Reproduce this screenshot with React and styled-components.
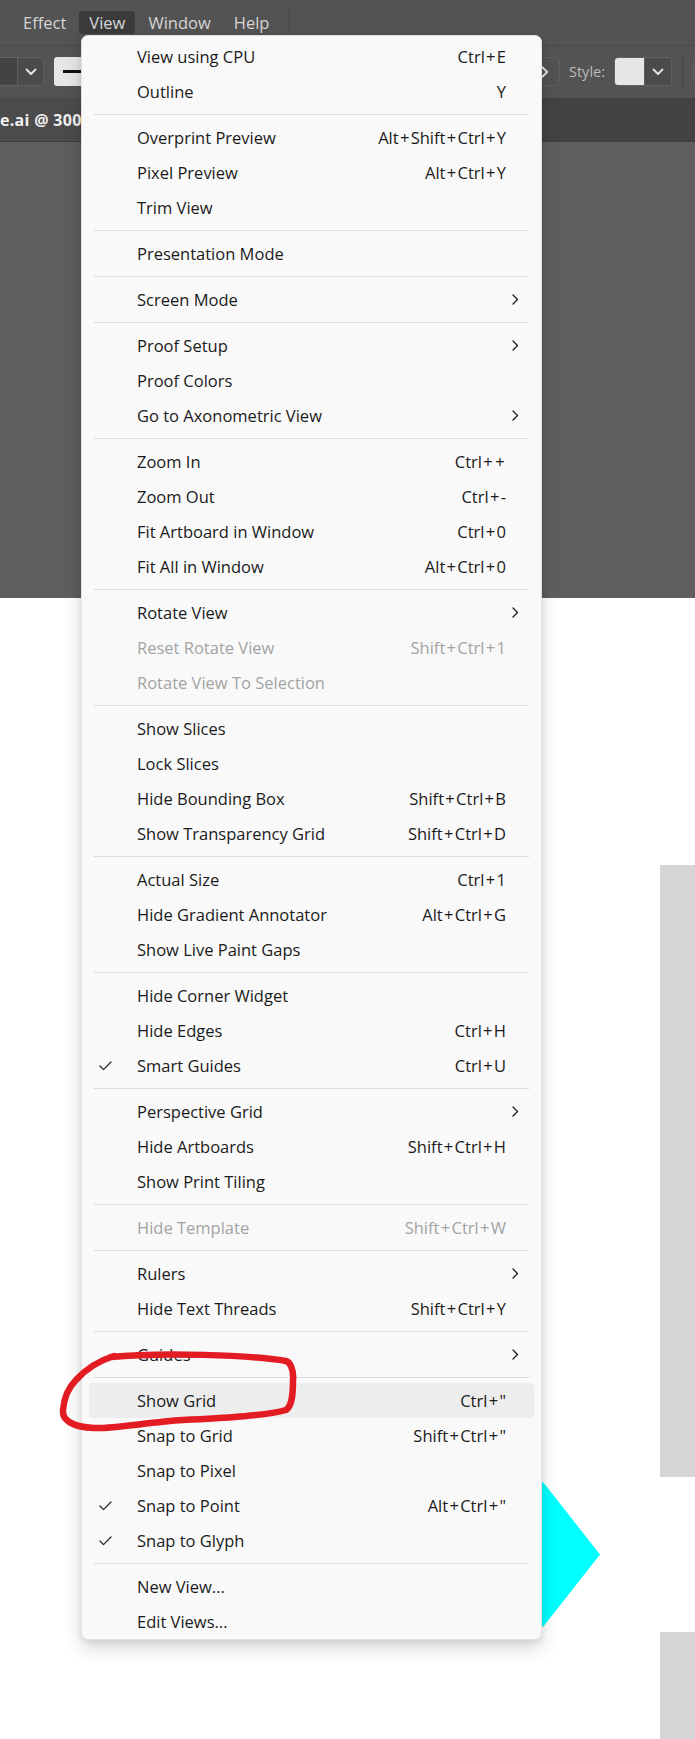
import React from "react";
import styled, { createGlobalStyle } from "styled-components";

const Global = createGlobalStyle`
  html, body { margin: 0; padding: 0; background: #ffffff; }
  * { box-sizing: border-box; }
`;

const Page = styled.div`
  position: relative;
  width: 695px;
  height: 1739px;
  overflow: hidden;
  font-family: "Open Sans", "Noto Sans", sans-serif;
  display: flex;
  flex-direction: column;
`;

/* ---------- application chrome ---------- */
const Chrome = styled.div`
  display: flex;
  flex-direction: column;
  height: 598px;
  background: #5e5e5e;
`;

const MenuBar = styled.div`
  height: 45px;
  background: #535353;
  display: flex;
  align-items: center;
  padding-left: 13px;
  gap: 3px;
`;

const MenuTitle = styled.div`
  height: 23px;
  padding: 0 10px;
  display: flex;
  align-items: center;
  font-size: 16.5px;
  color: #d6d6d6;
  border-radius: 3px;
  background: ${(p) => (p.$open ? "#3b3b3b" : "transparent")};
  margin-top: -1px;
`;

const BarDivider = styled.div`
  width: 1px;
  height: 30px;
  background: #464646;
  margin-left: 7px;
  margin-top: 2px;
`;

const ControlBar = styled.div`
  height: 53px;
  background: #535353;
  border-top: 1px solid #4a4a4a;
  display: flex;
  align-items: center;
  padding-bottom: 1px;
`;

const Dropdown = styled.div`
  height: 29px;
  width: ${(p) => p.$w}px;
  margin-left: ${(p) => p.$ml || 0}px;
  border: 1px solid #616161;
  border-radius: 4px;
  overflow: hidden;
  display: flex;
  flex-shrink: 0;
`;

const Field = styled.div`
  flex: 1;
  background: ${(p) => p.$bg || "#474747"};
  display: flex;
  align-items: center;
`;

const Caret = styled.div`
  width: ${(p) => p.$w || 26}px;
  background: #4b4b4b;
  border-left: 1px solid #5f5f5f;
  display: flex;
  align-items: center;
  justify-content: center;
`;

const StrokeBox = styled.div`
  height: 29px;
  width: 60px;
  margin-left: 10px;
  background: #e6e6e6;
  border-radius: 3px;
  display: flex;
  align-items: center;
  padding-left: 9px;
  flex-shrink: 0;
`;

const Dash = styled.div`
  width: 40px;
  height: 3px;
  background: #111;
`;

const RightTools = styled.div`
  margin-left: auto;
  margin-right: -20px;
  display: flex;
  align-items: center;
  gap: 9px;
`;

const ArrowBox = styled.div`
  width: 40px;
  height: 29px;
  border: 1px solid #5f5f5f;
  border-radius: 4px;
  display: flex;
  align-items: center;
  justify-content: flex-end;
  padding-right: 10px;
`;

const ToolLabel = styled.span`
  font-size: 14.5px;
  color: #bcbcbc;
`;

const VDivider = styled.div`
  width: 1px;
  height: 35px;
  background: #474747;
  margin: 0 1px;
`;

const TabBar = styled.div`
  height: 43px;
  background: #434343;
  display: flex;
  align-items: stretch;
`;

const DocTab = styled.div`
  width: 120px;
  background: #4b4b4b;
  display: flex;
  align-items: center;
  font-size: 16px;
  font-weight: 700;
  letter-spacing: 0.3px;
  color: #f0f0f0;
  white-space: nowrap;
  overflow: hidden;
`;

const DarkCanvas = styled.div`
  flex: 1;
  border-top: 1px solid #3e3e3e;
  background: #5e5e5e;
`;

/* ---------- white artboard ---------- */
const Artboard = styled.div`
  position: relative;
  flex: 1;
  background: #ffffff;
`;

const GrayBlock = styled.div`
  position: absolute;
  left: 660px;
  right: 0;
  background: #d5d5d8;
`;

const Diamond = styled.svg`
  position: absolute;
  left: 486px;
  top: 884px;
`;

/* ---------- dropdown menu ---------- */
const Menu = styled.div`
  position: absolute;
  left: 81px;
  top: 35px;
  width: 461px;
  padding: 3px 0 0;
  background: #f9f9f9;
  border: 1px solid #e2e2e2;
  border-radius: 7px;
  box-shadow: 0 8px 18px rgba(0, 0, 0, 0.16), 0 2px 6px rgba(0, 0, 0, 0.08);
  font-size: 16.5px;
  color: #1b1b1b;
`;

const Row = styled.div`
  height: 35px;
  margin: 0 7px;
  display: grid;
  grid-template-columns: 48px 1fr auto 28px;
  align-items: center;
  border-radius: 4px;
  background: ${(p) => (p.$active ? "#ededed" : "transparent")};
  color: ${(p) => (p.$disabled ? "#a3a3a3" : "#1b1b1b")};
  white-space: nowrap;
`;

const CheckCell = styled.div`
  padding-left: 10px;
  display: flex;
  align-items: center;
`;

const Shortcut = styled.span`
  text-align: right;
`;

const Plus = styled.span`
  padding: 0 1.3px;
`;

const SubCell = styled.div`
  display: flex;
  justify-content: flex-end;
  padding-right: 15px;
`;

const Separator = styled.div`
  height: 1px;
  margin: 5px 12px;
  background: #dcdcdc;
`;

const Scribble = styled.svg`
  position: absolute;
  left: 50px;
  top: 1340px;
  overflow: visible;
  pointer-events: none;
`;

const DownChevron = ({ color = "#e6e6e6" }) => (
  <svg width="12" height="8" viewBox="0 0 12 8">
    <polyline points="1.5,1.5 6,6 10.5,1.5" fill="none" stroke={color} strokeWidth="1.8" strokeLinecap="round" strokeLinejoin="round" />
  </svg>
);

const RightChevron = ({ color = "#1b1b1b", w = 7, h = 11, sw = 1.3 }) => (
  <svg width={w} height={h} viewBox="0 0 7 11">
    <polyline points="1,1 5.5,5.5 1,10" fill="none" stroke={color} strokeWidth={sw} strokeLinecap="round" strokeLinejoin="round" />
  </svg>
);

const Check = () => (
  <svg width="13" height="10" viewBox="0 0 13 10">
    <polyline points="1,5 4.5,8.6 12,1" fill="none" stroke="#2a2a2a" strokeWidth="1.3" strokeLinecap="round" strokeLinejoin="round" />
  </svg>
);

const renderShortcut = (sc) =>
  Array.from(sc).map((ch, i) => (ch === "+" ? <Plus key={i}>+</Plus> : ch));

const groups = [
  [{ label: "View using CPU", sc: "Ctrl+E" }, { label: "Outline", sc: "Y" }],
  [
    { label: "Overprint Preview", sc: "Alt+Shift+Ctrl+Y" },
    { label: "Pixel Preview", sc: "Alt+Ctrl+Y" },
    { label: "Trim View" },
  ],
  [{ label: "Presentation Mode" }],
  [{ label: "Screen Mode", sub: true }],
  [
    { label: "Proof Setup", sub: true },
    { label: "Proof Colors" },
    { label: "Go to Axonometric View", sub: true },
  ],
  [
    { label: "Zoom In", sc: "Ctrl++" },
    { label: "Zoom Out", sc: "Ctrl+-" },
    { label: "Fit Artboard in Window", sc: "Ctrl+0" },
    { label: "Fit All in Window", sc: "Alt+Ctrl+0" },
  ],
  [
    { label: "Rotate View", sub: true },
    { label: "Reset Rotate View", sc: "Shift+Ctrl+1", disabled: true },
    { label: "Rotate View To Selection", disabled: true },
  ],
  [
    { label: "Show Slices" },
    { label: "Lock Slices" },
    { label: "Hide Bounding Box", sc: "Shift+Ctrl+B" },
    { label: "Show Transparency Grid", sc: "Shift+Ctrl+D" },
  ],
  [
    { label: "Actual Size", sc: "Ctrl+1" },
    { label: "Hide Gradient Annotator", sc: "Alt+Ctrl+G" },
    { label: "Show Live Paint Gaps" },
  ],
  [
    { label: "Hide Corner Widget" },
    { label: "Hide Edges", sc: "Ctrl+H" },
    { label: "Smart Guides", sc: "Ctrl+U", checked: true },
  ],
  [
    { label: "Perspective Grid", sub: true },
    { label: "Hide Artboards", sc: "Shift+Ctrl+H" },
    { label: "Show Print Tiling" },
  ],
  [{ label: "Hide Template", sc: "Shift+Ctrl+W", disabled: true }],
  [{ label: "Rulers", sub: true }, { label: "Hide Text Threads", sc: "Shift+Ctrl+Y" }],
  [{ label: "Guides", sub: true }],
  [
    { label: "Show Grid", sc: 'Ctrl+"', active: true },
    { label: "Snap to Grid", sc: 'Shift+Ctrl+"' },
    { label: "Snap to Pixel" },
    { label: "Snap to Point", sc: 'Alt+Ctrl+"', checked: true },
    { label: "Snap to Glyph", checked: true },
  ],
  [{ label: "New View..." }, { label: "Edit Views..." }],
];

export default function App() {
  return (
    <Page>
      <Global />
      <Chrome>
        <MenuBar>
          <MenuTitle>Effect</MenuTitle>
          <MenuTitle $open>View</MenuTitle>
          <MenuTitle>Window</MenuTitle>
          <MenuTitle>Help</MenuTitle>
          <BarDivider />
        </MenuBar>
        <ControlBar>
          <Dropdown $w={64} $ml={-20}>
            <Field $bg="#434343" />
            <Caret>
              <DownChevron />
            </Caret>
          </Dropdown>
          <StrokeBox>
            <Dash />
          </StrokeBox>
          <RightTools>
            <ArrowBox>
              <RightChevron color="#e6e6e6" w={8} h={12} sw={1.8} />
            </ArrowBox>
            <ToolLabel>Style:</ToolLabel>
            <Dropdown $w={58}>
              <Field $bg="#e6e6e6" />
              <Caret $w={27}>
                <DownChevron />
              </Caret>
            </Dropdown>
            <VDivider />
            <Dropdown $w={22} />
          </RightTools>
        </ControlBar>
        <TabBar>
          <DocTab>e.ai @ 300</DocTab>
        </TabBar>
        <DarkCanvas />
      </Chrome>

      <Artboard>
        <GrayBlock style={{ top: 267, height: 612 }} />
        <GrayBlock style={{ top: 1034, bottom: 0 }} />
        <Diamond width="114" height="145" viewBox="0 0 114 145">
          <polygon points="57,0 114,72.5 57,145 0,72.5" fill="#00ffff" />
        </Diamond>
      </Artboard>

      <Menu>
        {groups.map((g, gi) => (
          <React.Fragment key={gi}>
            {gi > 0 && <Separator />}
            {g.map((it) => (
              <Row key={it.label} $active={it.active} $disabled={it.disabled}>
                <CheckCell>{it.checked && <Check />}</CheckCell>
                <span>{it.label}</span>
                <Shortcut>{it.sc ? renderShortcut(it.sc) : ""}</Shortcut>
                <SubCell>{it.sub && <RightChevron />}</SubCell>
              </Row>
            ))}
          </React.Fragment>
        ))}
      </Menu>

      <Scribble width="260" height="100" viewBox="0 0 260 100">
        <path
          d="M61 17 C110 12, 200 15, 236 21 C240 22, 244 30, 243 40 C243 55, 242 66, 236 70 C215 76, 170 78, 133 80 C100 82, 62 89, 44 88 C22 87, 12 80, 13 70 C14 58, 18 48, 26 40 C35 30, 48 21, 64 16"
          fill="none"
          stroke="#e31b23"
          strokeWidth="6.5"
          strokeLinecap="round"
          strokeLinejoin="round"
        />
      </Scribble>
    </Page>
  );
}
